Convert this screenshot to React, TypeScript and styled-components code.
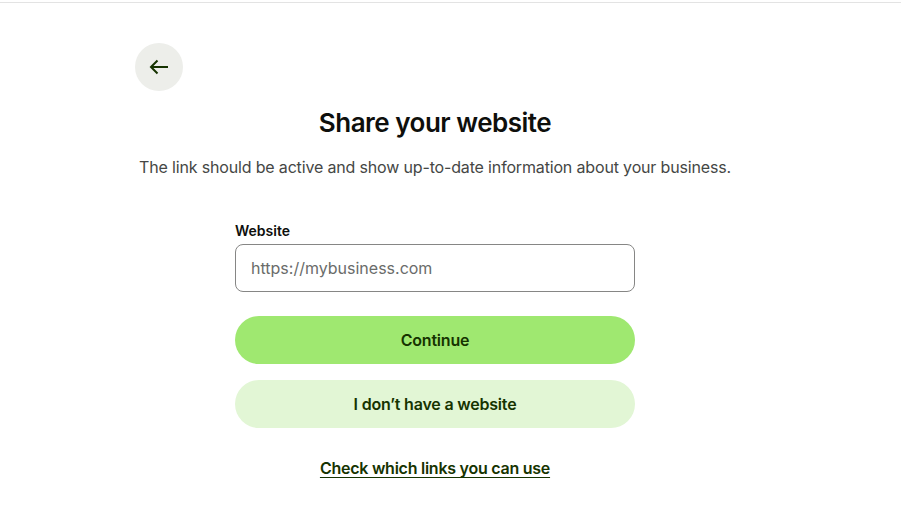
import React from 'react';
import styled, { createGlobalStyle } from 'styled-components';

const GlobalStyle = createGlobalStyle`
    html, body {
        margin: 0;
        padding: 0;
        background: #ffffff;
        font-family: Inter, "Noto Sans", sans-serif;
        color: #0e0f0c;
    }
`;

const TopRule = styled.div`
    margin-top: 2px;
    height: 1px;
    background-color: #e3e3e3;
`;

const Page = styled.main`
    display: flex;
    justify-content: flex-start;
    padding: 40px 0 40px 135px;
`;

const Column = styled.div`
    width: 600px;
    display: flex;
    flex-direction: column;
    align-items: center;
`;

const BackRow = styled.div`
    align-self: stretch;
    display: flex;
`;

const BackButton = styled.button`
    width: 48px;
    height: 48px;
    border-radius: 50%;
    border: none;
    background-color: #edeeea;
    display: flex;
    align-items: center;
    justify-content: center;
    padding: 0;
    cursor: pointer;
`;

const Title = styled.h1`
    margin: 16px 0 0;
    font-size: 26px;
    line-height: 32px;
    font-weight: 600;
    letter-spacing: -0.5px;
    color: #0e0f0c;
`;

const Subtitle = styled.p`
    margin: 16px 0 0;
    font-size: 16px;
    line-height: 24px;
    letter-spacing: -0.16px;
    color: #454745;
    white-space: nowrap;
`;

const Form = styled.form`
    width: 400px;
    margin-top: 42px;
    display: flex;
    flex-direction: column;
`;

const Label = styled.label`
    font-size: 14px;
    line-height: 20px;
    font-weight: 600;
    color: #0e0f0c;
    margin-bottom: 3px;
`;

const Input = styled.input`
    box-sizing: border-box;
    height: 48px;
    width: 100%;
    border: 1px solid #868685;
    border-radius: 8px;
    padding: 0 15px;
    font-family: inherit;
    font-size: 16px;
    color: #0e0f0c;
    outline: none;

    &::placeholder {
        color: #6a6c6a;
    }
`;

const Button = styled.button<{ $variant: 'primary' | 'secondary' }>`
    height: 48px;
    width: 100%;
    border: none;
    border-radius: 24px;
    font-family: inherit;
    font-size: 16px;
    font-weight: 600;
    letter-spacing: -0.2px;
    color: #163300;
    background-color: ${p => (p.$variant === 'primary' ? '#9fe870' : '#e2f6d5')};
    margin-top: ${p => (p.$variant === 'primary' ? '24px' : '16px')};
    cursor: pointer;
`;

const HelpLink = styled.a`
    margin-top: 28px;
    align-self: center;
    font-size: 16px;
    line-height: 24px;
    font-weight: 600;
    letter-spacing: -0.25px;
    color: #163300;
    text-decoration: underline;
    text-underline-offset: 3px;
    text-decoration-thickness: 1px;
    cursor: pointer;
`;

const ArrowLeft = () => (
    <svg width="24" height="24" viewBox="0 0 24 24" fill="none">
        <path d="M21 12H4M10.5 5.5L4 12l6.5 6.5" stroke="#163300" strokeWidth="2" />
    </svg>
);

const App = () => {
    return (
        <>
            <GlobalStyle />
            <TopRule />
            <Page>
                <Column>
                    <BackRow>
                        <BackButton aria-label="Back">
                            <ArrowLeft />
                        </BackButton>
                    </BackRow>
                    <Title>Share your website</Title>
                    <Subtitle>The link should be active and show up-to-date information about your business.</Subtitle>
                    <Form onSubmit={e => e.preventDefault()}>
                        <Label htmlFor="website">Website</Label>
                        <Input id="website" placeholder="https://mybusiness.com" />
                        <Button type="submit" $variant="primary">Continue</Button>
                        <Button type="button" $variant="secondary">I don’t have a website</Button>
                        <HelpLink>Check which links you can use</HelpLink>
                    </Form>
                </Column>
            </Page>
        </>
    );
};

export default App;
